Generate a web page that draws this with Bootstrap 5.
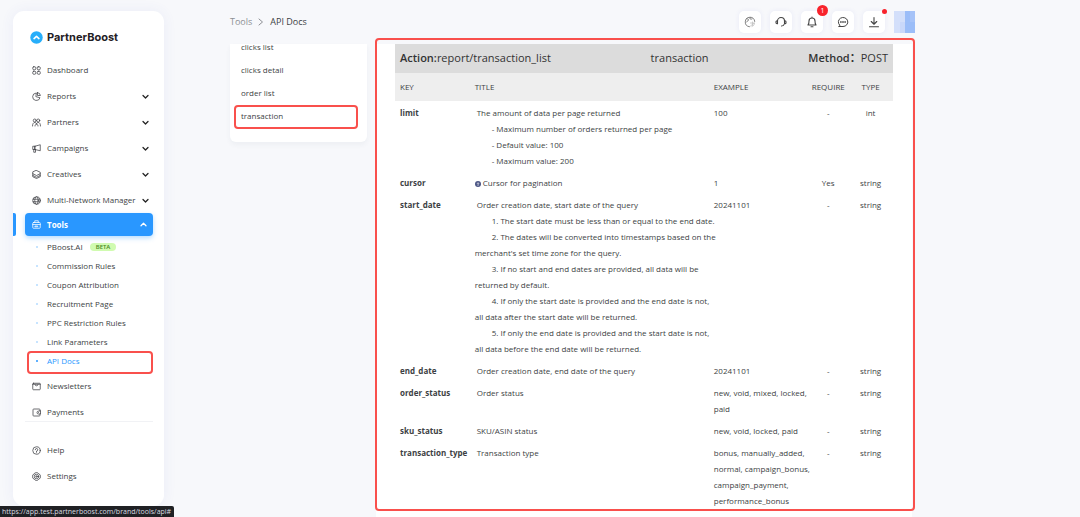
<!DOCTYPE html>
<html lang="en">
<head>
<meta charset="utf-8">
<meta name="viewport" content="width=device-width, initial-scale=1">
<title>API Docs - PartnerBoost</title>
<link href="https://cdn.jsdelivr.net/npm/bootstrap@5.3.0/dist/css/bootstrap.min.css" rel="stylesheet">
<style>
  :root { --ink: #3d3f44; --brand: #2997ff; --flag: #f9504c; --page: #f7f8fb; }
  body { font-family: "Open Sans", "Noto Sans CJK SC", sans-serif; font-size: 8px; line-height: 16px; color: var(--ink); background: var(--page); height: 100vh; overflow: hidden; }
  a { color: inherit; text-decoration: none; }
  svg { display: block; flex: none; fill: none; stroke: currentColor; stroke-linecap: round; stroke-linejoin: round; }

  .shell { height: 100vh; padding-left: 13px; }
  .sidebar { width: 151px; margin: 11px 0; padding: 15px 11px 0 12px; border-radius: 11px; background: #fff; box-shadow: 0 0 14px rgba(70, 80, 200, .07); }
  .brand { font-family: Inter, sans-serif; font-size: 11px; font-weight: 700; color: #1f2024; height: 22px; padding-left: 5px; gap: 4px; }
  .brand svg { stroke: none; }
  .main-menu { padding-top: 9px; }
  .menu-item { height: 26px; padding: 0 4px 0 7px; gap: 6px; width: 100%; border: 0; background: none; color: inherit; font-size: 8px; text-align: left; white-space: nowrap; }
  .menu-item .chev { margin-left: auto; color: #222; }
  .menu-item.current { position: relative; height: 23px; border-radius: 4px; background: var(--brand); color: #fff; font-weight: 700; box-shadow: 0 2px 5px rgba(41, 151, 255, .35); }
  .menu-item.current .chev { color: #fff; margin-right: 2px; }
  .menu-item.current::before { content: ""; position: absolute; left: -12px; top: 0; bottom: 0; width: 3px; background: var(--brand); border-radius: 0 2px 2px 0; }
  .submenu { padding: 1px 0 3px; }
  .submenu a { height: 19px; padding-left: 11px; gap: 9px; }
  .submenu a::before { content: ""; width: 2px; height: 2px; border-radius: 1px; background: #b5dbff; }
  .submenu a.chosen { color: var(--brand); position: relative; }
  .submenu a.chosen::before { background: var(--brand); }
  .beta { font-size: 6px; line-height: 8px; font-weight: 600; padding: 0 6px; border-radius: 4px; background: #d0fbb0; color: #47881f; margin-left: -2px; }
  .rule { border-top: 1px solid #f1f2f5; margin: -4px 0 15px; }

  .flagged { position: absolute; border: 2px solid var(--flag); border-radius: 4px; pointer-events: none; }
  .submenu .flagged { inset: 0 0 -4px 2px; }

  .workspace { padding: 0 165px 0 66px; min-width: 0; }
  .topbar { height: 44px; }
  .crumbs { font-size: 9px; gap: 6px; }
  .crumbs a, .crumbs svg { color: #8d8f94; }
  .tool-btn { position: relative; width: 22px; height: 22px; padding: 0; border: 0; border-radius: 5px; background: #fff; color: #444; box-shadow: 0 0 5px rgba(70, 80, 200, .08); }
  .topbar-tools { gap: 9px; }
  .globe { color: #777; }
  .avatar { stroke: none; }
  .alert-count { position: absolute; top: -6px; right: -5px; width: 11px; height: 11px; border-radius: 50%; background: #f8232c; color: #fff; font-size: 7px; line-height: 11px; text-align: center; }
  .alert-dot { position: absolute; top: -2px; right: -2px; width: 5px; height: 5px; border-radius: 50%; background: #f8232c; }

  .columns { gap: 9px; min-height: 0; }
  .endpoints { width: 137px; padding: 0 9px 4px 11px; border-radius: 0 0 6px 6px; background: #fff; box-shadow: 0 3px 5px rgba(60, 70, 100, .05); align-self: flex-start; }
  .endpoints a { display: block; height: 23px; }
  .endpoints a:first-child { margin-top: -5px; }
  .endpoints a.chosen { position: relative; height: 30px; }
  .endpoints .flagged { inset: -3px 0 9px -7px; }

  .doc { position: relative; padding: 0 19px; margin-right: 3px; background: #fff; }
  .doc > .flagged { inset: -6px -3px 6px -1px; }
  .action-bar { height: 29px; padding: 0 5px 2px; background: #dcdcdc; font-size: 11px; color: #333; }
  .action-bar b { font-weight: 600; }
  .params { table-layout: fixed; width: 100%; color: inherit; }
  .params th, .params td { padding: 3px 0 3px 5px; vertical-align: top; text-align: left; white-space: nowrap; }
  .params thead th { background: #eee; font-weight: 400; padding: 6px 0 6px 5px; }
  .params tbody tr:first-child > * { padding-top: 4px; }
  .params tbody th { font-weight: 700; }
  .params th:nth-child(n+4), .params td:nth-child(n+4) { text-align: center; padding-left: 0; }
  .first { padding-left: 2px; }
  .step { display: block; text-indent: 17px; }
  .hint { display: inline-block; vertical-align: -1px; stroke: none; }
  .url-tip { position: fixed; left: 0; bottom: 0; height: 11px; padding: 0 3px 0 2px; font-size: 7px; line-height: 11px; background: #202124; color: #dadce0; border-radius: 0 2px 0 0; }
</style>
</head>
<body>
<div class="shell d-flex">
  <aside class="sidebar flex-shrink-0">
    <a href="#" class="brand d-flex align-items-center">
      <svg width="13" height="13" viewBox="0 0 24 24"><circle cx="12" cy="12" r="11.500" fill="#27aefa"/><path d="m7.500 14 4.500-4 4.500 4" stroke="#fff" stroke-width="3"/></svg>
      PartnerBoost
    </a>
    <nav class="main-menu" aria-label="Main">
      <a href="#" class="menu-item d-flex align-items-center"><svg width="9" height="9" viewBox="0 0 18 18" stroke-width="1.500"><rect x="1.500" y="1.500" width="6" height="6" rx="2"/><rect x="10.500" y="1.500" width="6" height="6" rx="2"/><rect x="1.500" y="10.500" width="6" height="6" rx="2"/><rect x="10.500" y="10.500" width="6" height="6" rx="2"/></svg>Dashboard</a>
      <button type="button" class="menu-item d-flex align-items-center"><svg width="9" height="9" viewBox="0 0 18 18" stroke-width="1.500"><path d="M8 2a7.500 7.500 0 1 0 8 9.500L8.500 9.500z"/><path d="M11 1.200V7h5.800A6.500 6.500 0 0 0 11 1.200z"/></svg>Reports<svg class="chev" width="7" height="7" viewBox="0 0 14 14" stroke-width="2.500"><path d="m2 5 5 5 5-5"/></svg></button>
      <button type="button" class="menu-item d-flex align-items-center"><svg width="9" height="9" viewBox="0 0 18 18" stroke-width="1.500"><circle cx="5.500" cy="5" r="3"/><circle cx="12.500" cy="5" r="3"/><path d="M1 16c0-4.500 2-7 4.500-7S9 11 9 12.500C9 11 10 9 12.500 9S17 11.500 17 16M6 16c0-2 1-3.500 3-3.500s3 1.500 3 3.500"/></svg>Partners<svg class="chev" width="7" height="7" viewBox="0 0 14 14" stroke-width="2.500"><path d="m2 5 5 5 5-5"/></svg></button>
      <button type="button" class="menu-item d-flex align-items-center"><svg width="9" height="9" viewBox="0 0 18 18" stroke-width="1.500"><path d="M6 4.500 16.500 1.500v12L6 11zM6 4.500H1.500V11H6M3.500 11v5.500H7V11M6 4.500V11"/></svg>Campaigns<svg class="chev" width="7" height="7" viewBox="0 0 14 14" stroke-width="2.500"><path d="m2 5 5 5 5-5"/></svg></button>
      <button type="button" class="menu-item d-flex align-items-center"><svg width="9" height="9" viewBox="0 0 18 18" stroke-width="1.500"><path d="m9 1 7.500 3.500v3L9 11 1.500 7.500v-3zM1.500 7.500v3.500L9 14.500l7.500-3.500V7.500M1.500 11v2.500L9 17l7.500-3.500V11"/></svg>Creatives<svg class="chev" width="7" height="7" viewBox="0 0 14 14" stroke-width="2.500"><path d="m2 5 5 5 5-5"/></svg></button>
      <button type="button" class="menu-item d-flex align-items-center"><svg width="9" height="9" viewBox="0 0 18 18" stroke-width="1.500"><circle cx="9" cy="9" r="7.500"/><ellipse cx="9" cy="9" rx="3.500" ry="7.500"/><path d="M2 6.500h14M2 11.500h14"/></svg>Multi-Network Manager<svg class="chev" width="7" height="7" viewBox="0 0 14 14" stroke-width="2.500"><path d="m2 5 5 5 5-5"/></svg></button>
      <button type="button" class="menu-item current d-flex align-items-center" aria-expanded="true"><svg width="9" height="9" viewBox="0 0 18 18" stroke-width="1.500"><rect x="1.500" y="5" width="15" height="11.500" rx="1.500"/><path d="M5.500 5V1.500h7V5M1.500 9h15M6.500 12h5v1.500h-5z"/></svg>Tools<svg class="chev" width="7" height="7" viewBox="0 0 14 14" stroke-width="2.500"><path d="m2 9.500 5-5 5 5"/></svg></button>
      <div class="submenu">
        <a href="#" class="d-flex align-items-center">PBoost.AI <span class="beta">BETA</span></a>
        <a href="#" class="d-flex align-items-center">Commission Rules</a>
        <a href="#" class="d-flex align-items-center">Coupon Attribution</a>
        <a href="#" class="d-flex align-items-center">Recruitment Page</a>
        <a href="#" class="d-flex align-items-center">PPC Restriction Rules</a>
        <a href="#" class="d-flex align-items-center">Link Parameters</a>
        <a href="#" class="chosen d-flex align-items-center">API Docs<span class="flagged"></span></a>
      </div>
      <a href="#" class="menu-item d-flex align-items-center"><svg width="9" height="9" viewBox="0 0 18 18" stroke-width="1.500"><rect x="1.500" y="2.500" width="15" height="13" rx="1.500"/><path d="M1.500 4.500h15M6 5.500c0 3 6 3 6 0"/></svg>Newsletters</a>
      <a href="#" class="menu-item d-flex align-items-center"><svg width="9" height="9" viewBox="0 0 18 18" stroke-width="1.500"><path d="M16 6V3.500A1.500 1.500 0 0 0 14.500 2h-11A1.500 1.500 0 0 0 2 3.500v11A1.500 1.500 0 0 0 3.500 16h11a1.500 1.500 0 0 0 1.500-1.500V12M17 6v6h-4a3 3 0 0 1 0-6zM13 9h.1"/></svg>Payments</a>
      <div class="rule"></div>
      <a href="#" class="menu-item d-flex align-items-center"><svg width="9" height="9" viewBox="0 0 18 18" stroke-width="1.500"><circle cx="9" cy="9" r="7.500"/><path d="M6.500 7.500a2.500 2.500 0 1 1 2.500 2.500v1.200M9 13.500v.1"/></svg>Help</a>
      <a href="#" class="menu-item d-flex align-items-center"><svg width="9" height="9" viewBox="0 0 18 18" stroke-width="1.500"><path d="m6 2 3-1 3 1 1.500 1.700 2.700 1.800.8 3.500-.8 3.500-2.700 1.800L12 16l-3 1-3-1-1.500-1.700-2.700-1.800L1 9l.8-3.500 2.700-1.800z"/><circle cx="9" cy="9" r="4.500"/><circle cx="9" cy="9" r="1.500"/></svg>Settings</a>
    </nav>
  </aside>

  <div class="workspace flex-fill d-flex flex-column">
    <header class="topbar d-flex flex-shrink-0 align-items-center justify-content-between">
      <nav class="crumbs d-flex align-items-center" aria-label="Breadcrumb">
        <a href="#">Tools</a>
        <svg width="6" height="8" viewBox="0 0 6 8"><path d="m1 1 3.500 3L1 7"/></svg>
        <span>API Docs</span>
      </nav>
      <div class="topbar-tools d-flex">
        <button type="button" class="tool-btn d-flex align-items-center justify-content-center" aria-label="Language"><svg class="globe" width="12" height="12" viewBox="0 0 24 24" stroke-width="1.800"><path d="M11 21.500A9.500 9.500 0 1 1 21.500 11M5 5.500c2 0 4 0 4 2.500s-3 1-4 4M12 2.500c-2 3 1 5 4 3.500"/><path d="M13 14h7M17 12v7M13 20l6-5M21 14c0 3-2 6-5 7" stroke="#c4c4c4"/></svg></button>
        <button type="button" class="tool-btn d-flex align-items-center justify-content-center" aria-label="Support"><svg width="12" height="12" viewBox="0 0 24 24" stroke-width="2.200"><path d="M5 10a7 7 0 0 1 14 0M5 9.500v6H4a2 2 0 0 1-2-2v-2a2 2 0 0 1 2-2zM19 9.500v6h1a2 2 0 0 0 2-2v-2a2 2 0 0 0-2-2zM18.500 16c-.5 3-2.500 4-5.500 4"/></svg></button>
        <button type="button" class="tool-btn d-flex align-items-center justify-content-center" aria-label="Notifications"><svg width="12" height="12" viewBox="0 0 24 24" stroke-width="2.200"><path d="M4 18c2-2 2-4 2-8a6 6 0 0 1 12 0c0 4 0 6 2 8zM10 21.500h4M12 2v2"/></svg><span class="alert-count">1</span></button>
        <button type="button" class="tool-btn d-flex align-items-center justify-content-center" aria-label="Messages"><svg width="12" height="12" viewBox="0 0 24 24" stroke-width="2"><path d="M4 21h8a9.500 9 0 1 0-6.500-2.500zM7 12h.1M12 12h.1M17 12h.1M7 12h10"/></svg></button>
        <button type="button" class="tool-btn d-flex align-items-center justify-content-center" aria-label="Downloads"><svg width="12" height="12" viewBox="0 0 24 24" stroke-width="2.200"><path d="M12 3v13M6.500 11l5.500 5.500 5.500-5.500M3 21.500h18"/></svg><span class="alert-dot"></span></button>
        <svg class="avatar" width="21" height="22" viewBox="0 0 21 22" role="img" aria-label="Account"><path fill="#d3dffa" d="M0 0h21v22H0z"/><path fill="#c9d8fa" d="M6 11h5v11H6z"/><path fill="#9bbdf8" d="M11 0h10v22H11z"/><path fill="#a6c3f8" d="M16 0h5v11h-5z"/></svg>
      </div>
    </header>

    <div class="columns d-flex flex-fill">
      <nav class="endpoints flex-shrink-0" aria-label="Endpoints">
        <a href="#">clicks list</a>
        <a href="#">clicks detail</a>
        <a href="#">order list</a>
        <a href="#" class="chosen">transaction<span class="flagged"></span></a>
      </nav>
      <main class="doc flex-fill">
        <div class="action-bar d-flex align-items-center justify-content-between">
          <span><b>Action:</b>report/transaction_list</span>
          <span>transaction</span>
          <span><b>Method：</b>POST</span>
        </div>
        <table class="params">
          <colgroup><col style="width:15%"><col style="width:48%"><col style="width:20%"><col style="width:8%"><col style="width:9%"></colgroup>
          <thead><tr><th>KEY</th><th>TITLE</th><th>EXAMPLE</th><th>REQUIRE</th><th>TYPE</th></tr></thead>
          <tbody>
            <tr><th>limit</th><td><span class="first">The amount of data per page returned</span><span class="step">- Maximum number of orders returned per page</span><span class="step">- Default value: 100</span><span class="step">- Maximum value: 200</span></td><td>100</td><td>-</td><td>int</td></tr>
            <tr><th>cursor</th><td><svg class="hint" width="6" height="6" viewBox="0 0 12 12"><circle cx="6" cy="6" r="6" fill="#4c5685"/><path d="M4.500 5a1.500 1.500 0 1 1 1.500 1.500v1M6 9v.2" stroke="#fff" stroke-width="1.200"/></svg> Cursor for pagination</td><td>1</td><td>Yes</td><td>string</td></tr>
            <tr><th>start_date</th><td><span class="first">Order creation date, start date of the query</span><span class="step">1. The start date must be less than or equal to the end date.</span><span class="step">2. The dates will be converted into timestamps based on the<br>merchant's set time zone for the query.</span><span class="step">3. If no start and end dates are provided, all data will be<br>returned by default.</span><span class="step">4. If only the start date is provided and the end date is not,<br>all data after the start date will be returned.</span><span class="step">5. If only the end date is provided and the start date is not,<br>all data before the end date will be returned.</span></td><td>20241101</td><td>-</td><td>string</td></tr>
            <tr><th>end_date</th><td><span class="first">Order creation date, end date of the query</span></td><td>20241101</td><td>-</td><td>string</td></tr>
            <tr><th>order_status</th><td><span class="first">Order status</span></td><td>new, void, mixed, locked,<br>paid</td><td>-</td><td>string</td></tr>
            <tr><th>sku_status</th><td><span class="first">SKU/ASIN status</span></td><td>new, void, locked, paid</td><td>-</td><td>string</td></tr>
            <tr><th>transaction_type</th><td><span class="first">Transaction type</span></td><td>bonus, manually_added,<br>normal, campaign_bonus,<br>campaign_payment,<br>performance_bonus</td><td>-</td><td>string</td></tr>
          </tbody>
        </table>
        <span class="flagged"></span>
      </main>
    </div>
  </div>
</div>
<div class="url-tip">https://app.test.partnerboost.com/brand/tools/api#</div>
<script src="https://cdn.jsdelivr.net/npm/bootstrap@5.3.0/dist/js/bootstrap.bundle.min.js"></script>
</body>
</html>
